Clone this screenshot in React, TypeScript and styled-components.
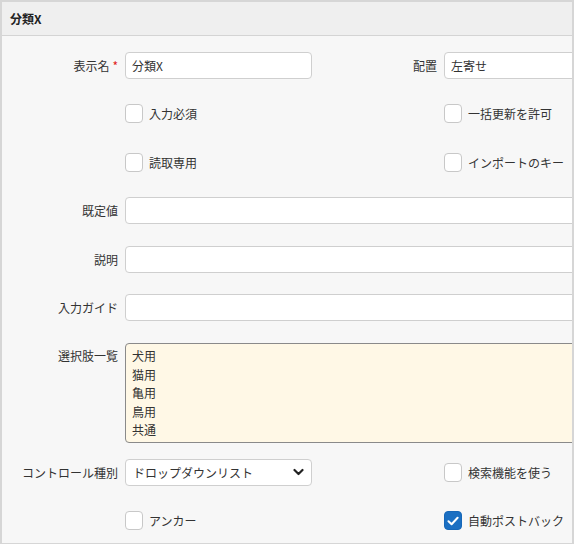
import styled, { createGlobalStyle } from "styled-components";

const GlobalStyle = createGlobalStyle`
  html, body {
    margin: 0;
    padding: 0;
    background: #ffffff;
  }
  body {
    font-family: "Noto Sans CJK JP", "Noto Sans", sans-serif;
    font-size: 12px;
    color: #333333;
  }
`;

const Panel = styled.div`
  width: 574px;
  height: 544px;
  box-sizing: border-box;
  border: 2px solid #d6d6d6;
  border-bottom-width: 1px;
  background: #f7f7f7;
  overflow: hidden;
`;

const Header = styled.div`
  height: 33px;
  display: flex;
  align-items: center;
  padding-left: 8px;
  background: #efefef;
  border-bottom: 1px solid #d4d4d4;
  font-weight: bold;
  font-size: 12px;
  color: #222;
`;

const Form = styled.div`
  display: grid;
  grid-template-columns: 123px 187px 132px 1fr;
  grid-template-rows: repeat(6, 48.5px) 116px repeat(2, 48.5px);
  align-items: center;
  padding-top: 5px;
`;

const Label = styled.div<{ $top?: boolean }>`
  text-align: right;
  padding-right: 7px;
  white-space: nowrap;
  color: #333;
  ${(p) => (p.$top ? "align-self: start; padding-top: 15px;" : "")}
`;

const Required = styled.span`
  color: #e02020;
  margin-left: 3px;
`;

const Field = styled.div<{ $span?: string }>`
  grid-column: ${(p) => p.$span || "auto"};
  min-width: 0;
`;

const TextBox = styled.div<{ $bleed?: boolean }>`
  height: 27px;
  box-sizing: border-box;
  border: 1px solid #cfcfcf;
  border-radius: 4px;
  background: #fff;
  padding: 0 6px;
  display: flex;
  align-items: center;
  width: ${(p) => (p.$bleed ? "calc(100% + 12px)" : "100%")};
`;

const Select = styled(TextBox)`
  justify-content: space-between;
  padding: 0 6px 0 7px;
  svg {
    margin-right: 1px;
  }
`;

const ListBox = styled.div`
  align-self: start;
  margin-top: 11px;
  height: 100px;
  box-sizing: border-box;
  width: calc(100% + 12px);
  border: 1px solid #8a8a8a;
  border-radius: 4px;
  background: #fff8e6;
  padding: 3px 6px;
  line-height: 18.5px;
`;

const CheckRow = styled.label`
  display: flex;
  align-items: center;
  gap: 6px;
  white-space: nowrap;
`;

const Box = styled.span<{ $checked?: boolean }>`
  width: 18px;
  height: 19px;
  box-sizing: border-box;
  border-radius: 4px;
  border: 1px solid ${(p) => (p.$checked ? "#1667b8" : "#c8c8c8")};
  background: ${(p) => (p.$checked ? "#1b6fc2" : "#fff")};
  display: flex;
  align-items: center;
  justify-content: center;
`;

function Check({ label, checked }: { label: string; checked?: boolean }) {
  return (
    <CheckRow>
      <Box $checked={checked}>
        {checked && (
          <svg width="12" height="10" viewBox="0 0 12 10">
            <path d="M1.5 5.2 L4.6 8.2 L10.6 1.8" fill="none" stroke="#fff" strokeWidth="2" strokeLinecap="round" strokeLinejoin="round" />
          </svg>
        )}
      </Box>
      {label}
    </CheckRow>
  );
}

const Empty = styled.div``;

export default function App() {
  const choices = ["犬用", "猫用", "亀用", "鳥用", "共通"];
  return (
    <>
      <GlobalStyle />
      <Panel>
        <Header>分類X</Header>
        <Form>
          <Label>
            表示名<Required>*</Required>
          </Label>
          <Field>
            <TextBox>分類X</TextBox>
          </Field>
          <Label>配置</Label>
          <Field>
            <TextBox $bleed>左寄せ</TextBox>
          </Field>

          <Empty />
          <Field $span="2 / 4">
            <Check label="入力必須" />
          </Field>
          <Field>
            <Check label="一括更新を許可" />
          </Field>

          <Empty />
          <Field $span="2 / 4">
            <Check label="読取専用" />
          </Field>
          <Field>
            <Check label="インポートのキー" />
          </Field>

          <Label>既定値</Label>
          <Field $span="2 / -1">
            <TextBox $bleed />
          </Field>

          <Label>説明</Label>
          <Field $span="2 / -1">
            <TextBox $bleed />
          </Field>

          <Label>入力ガイド</Label>
          <Field $span="2 / -1">
            <TextBox $bleed />
          </Field>

          <Label $top>選択肢一覧</Label>
          <ListBox style={{ gridColumn: "2 / -1" }}>
            {choices.map((c) => (
              <div key={c}>{c}</div>
            ))}
          </ListBox>

          <Label>コントロール種別</Label>
          <Field>
            <Select>
              ドロップダウンリスト
              <svg width="11" height="8" viewBox="0 0 11 8">
                <path d="M1.5 2 L5.5 6 L9.5 2" fill="none" stroke="#222" strokeWidth="2.2" strokeLinecap="round" strokeLinejoin="round" />
              </svg>
            </Select>
          </Field>
          <Empty />
          <Field>
            <Check label="検索機能を使う" />
          </Field>

          <Empty />
          <Field $span="2 / 4">
            <Check label="アンカー" />
          </Field>
          <Field>
            <Check label="自動ポストバック" checked />
          </Field>
        </Form>
      </Panel>
    </>
  );
}
